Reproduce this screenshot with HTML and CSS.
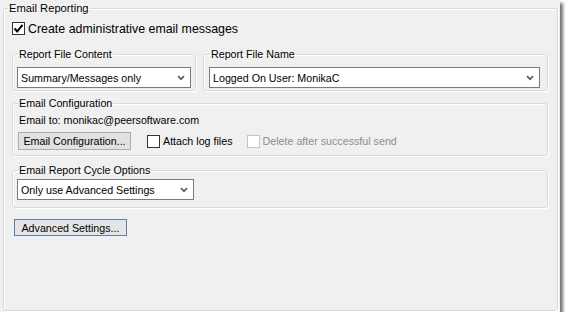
FILE: index.html
```html
<!DOCTYPE html>
<html lang="en">
<head>
  <meta charset="UTF-8">
  <title>Email Reporting</title>
  <link rel="stylesheet" href="styles.css">
</head>
<body>

  <div class="panel">
    <fieldset class="group outer">
      <legend>Email Reporting</legend>

      <label class="check-row top-check">
        <span class="box checked">
          <svg width="11" height="11" viewBox="0 0 11 11"><path d="M1.5 5.5 L4.2 8.5 L9.5 1.8" fill="none" stroke="#000" stroke-width="2"/></svg>
        </span>
        Create administrative email messages
      </label>

      <div class="row-two">
        <fieldset class="group content-group">
          <legend>Report File Content</legend>
          <div class="combo">
            <span>Summary/Messages only</span>
            <svg width="8" height="6" viewBox="0 0 8 6"><path d="M1 1.2 L4 4.2 L7 1.2" fill="none" stroke="#606060" stroke-width="1.7"/></svg>
          </div>
        </fieldset>
        <fieldset class="group name-group">
          <legend>Report File Name</legend>
          <div class="combo">
            <span>Logged On User: MonikaC</span>
            <svg width="8" height="6" viewBox="0 0 8 6"><path d="M1 1.2 L4 4.2 L7 1.2" fill="none" stroke="#606060" stroke-width="1.7"/></svg>
          </div>
        </fieldset>
      </div>

      <fieldset class="group config">
        <legend>Email Configuration</legend>
        <div class="email-to">Email to: monikac@peersoftware.com</div>
        <div class="config-row">
          <button class="btn config-btn">Email Configuration...</button>
          <label class="check-row">
            <span class="box"></span>
            Attach log files
          </label>
          <label class="check-row disabled">
            <span class="box"></span>
            Delete after successful send
          </label>
        </div>
      </fieldset>

      <fieldset class="group cycle">
        <legend>Email Report Cycle Options</legend>
        <div class="combo short">
          <span>Only use Advanced Settings</span>
          <svg width="8" height="6" viewBox="0 0 8 6"><path d="M1 1.2 L4 4.2 L7 1.2" fill="none" stroke="#606060" stroke-width="1.7"/></svg>
        </div>
      </fieldset>

      <button class="btn default">Advanced Settings...</button>
    </fieldset>
  </div>

</body>
</html>
```

FILE: styles.css
```css
body {
  margin: 0;
  background: #ffffff;
  font-family: 'Liberation Sans', Arial, sans-serif;
  font-size: 10.7px;
  color: #000;
}
.panel {
  width: 560px;
  height: 312px;
  background: #f0f0f0;
  box-shadow: 3px 3px 3px rgba(0,0,0,0.55);
  padding: 1px 2px 1px 3px;
  box-sizing: border-box;
  display: flex;
  flex-direction: column;
}
.group {
  margin: 0;
  border: 1px solid #d5dde3;
  border-radius: 3px;
  box-shadow: inset 1px 1px 0 #fff, 1px 1px 0 #fff;
  min-width: 0;
}
.group legend {
  padding: 0 1px;
  line-height: 14px;
  height: 14px;
  color: #000;
  white-space: nowrap;
}
.outer {
  flex: 1;
  padding: 6px 9px 0 8px;
}
.outer > legend {
  margin-left: -4px;
  font-size: 11.2px;
}
.check-row {
  display: flex;
  align-items: center;
  gap: 3px;
  height: 15px;
  white-space: nowrap;
}
.top-check {
  font-size: 12.4px;
}
.box {
  width: 11px;
  height: 11px;
  border: 1px solid #333;
  background: #fff;
  display: flex;
  align-items: center;
  justify-content: center;
}
.disabled {
  color: #8d8d8d;
}
.disabled .box {
  border-color: #c4c4c4;
}
.row-two {
  display: grid;
  grid-template-columns: 184px 345px;
  gap: 7px;
  margin-top: 11px;
}
.content-group {
  padding: 6px 4px 2px 4px;
}
.name-group {
  padding: 6px 7px 2px 5px;
}
.group .group legend {
  margin-left: 1px;
}
.combo {
  height: 21px;
  box-sizing: border-box;
  border: 1px solid #7a7a7a;
  background: #fff;
  display: flex;
  align-items: center;
  justify-content: space-between;
  padding: 0 5px 0 3px;
  white-space: nowrap;
}
.combo.short {
  width: 177px;
}
.config {
  margin-top: 5px;
  padding: 3px 5px 5px 4px;
}
.email-to {
  height: 15px;
  line-height: 15px;
  margin-left: 2px;
}
.config-row {
  display: flex;
  align-items: center;
  margin-top: 4px;
}
.btn {
  font-family: inherit;
  font-size: 10.7px;
  background: #e1e1e1;
  border: 1px solid #adadad;
  height: 18px;
  padding: 0 4px;
  color: #000;
  line-height: 14px;
  white-space: nowrap;
}
.config-btn {
  min-width: 113px;
  margin-left: 1px;
  margin-right: 16px;
}
.config-row .disabled {
  margin-left: 14px;
}
.cycle {
  margin-top: 7px;
  padding: 2px 5px 7px 4px;
}
.btn.default {
  margin-top: 11px;
  margin-left: 2px;
  min-width: 113px;
  height: 17px;
  background: #e5e5e5;
  border-color: #5a7fa8;
}
```
